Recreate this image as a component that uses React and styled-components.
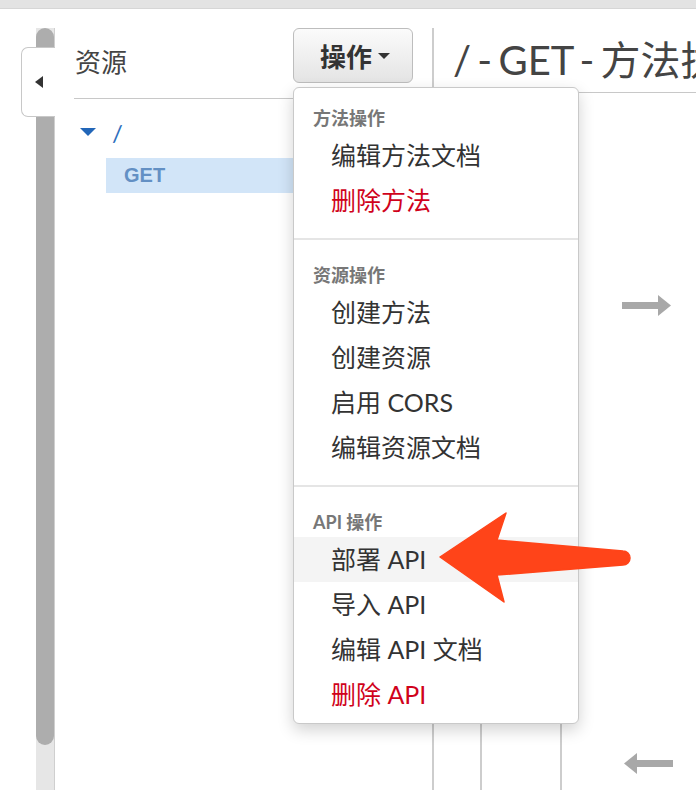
import styled, { createGlobalStyle } from "styled-components";

const GlobalStyle = createGlobalStyle`
  html, body {
    margin: 0;
    padding: 0;
    background: #fff;
  }
  body {
    font-family: Lato, "Noto Sans CJK SC", sans-serif;
    color: #333;
    overflow: hidden;
  }
  * {
    box-sizing: border-box;
  }
`;

const Page = styled.div`
  position: relative;
  width: 696px;
  height: 790px;
  overflow: hidden;
  display: flex;
  flex-direction: column;
`;

const TopBar = styled.div`
  flex-shrink: 0;
  height: 9px;
  background: #e3e3e3;
  border-bottom: 1px solid #d6d6d6;
`;

const Main = styled.div`
  flex: 1;
  min-height: 0;
  display: flex;
  padding: 19px 0 0 36px;
`;

const ScrollTrack = styled.div`
  position: relative;
  flex-shrink: 0;
  width: 19px;
  background: #e6e6e6;
  border-right: 1px solid #cfcfcf;
`;

const ScrollThumb = styled.div`
  height: 717px;
  background: #adadad;
  border-radius: 9px;
`;

const CollapseTab = styled.div`
  position: absolute;
  top: 19px;
  left: -15px;
  width: 34px;
  height: 70px;
  display: flex;
  align-items: center;
  justify-content: center;
  padding-left: 1px;
  background: #fff;
  border: 1px solid #c8c8c8;
  border-right: none;
  border-radius: 7px 0 0 7px;

  &::before {
    content: "";
    border-top: 6px solid transparent;
    border-bottom: 6px solid transparent;
    border-right: 8px solid #333;
  }
`;

const LeftPanel = styled.div`
  flex-shrink: 0;
  width: 379px;
  border-right: 2px solid #cdcdcd;
`;

const PanelHeader = styled.div`
  display: flex;
  justify-content: space-between;
  align-items: flex-start;
  height: 71px;
  margin-left: 19px;
  padding-right: 19px;
  border-bottom: 1px solid #c8c8c8;
`;

const PanelTitle = styled.div`
  margin: 18px 0 0 1px;
  font-size: 26px;
  line-height: 32px;
  color: #444;
`;

const ButtonWrap = styled.div`
  position: relative;
`;

const ActionButton = styled.button`
  display: flex;
  align-items: center;
  gap: 6px;
  width: 120px;
  height: 55px;
  padding: 0 0 0 26px;
  font-family: Lato, "Noto Sans CJK SC", sans-serif;
  font-size: 26px;
  font-weight: bold;
  color: #333;
  background: linear-gradient(#fbfbfb, #e4e4e4);
  border: 1px solid #bdbdbd;
  border-radius: 6px;

  &::after {
    content: "";
    border-top: 6px solid #333;
    border-left: 6px solid transparent;
    border-right: 6px solid transparent;
  }
`;

const Dropdown = styled.div`
  position: absolute;
  top: 59px;
  left: 0;
  z-index: 10;
  width: 286px;
  padding: 15px 0 6px;
  background: #fff;
  border: 1px solid #c9c9c9;
  border-radius: 6px;
  box-shadow: 0 6px 16px rgba(0, 0, 0, 0.18);
`;

const MenuHeader = styled.div`
  height: 30px;
  line-height: 30px;
  padding-left: 19px;
  font-size: 18px;
  font-weight: bold;
  color: #777;
`;

const MenuItem = styled.div`
  height: 45px;
  line-height: 45px;
  padding-left: 37px;
  font-size: 25px;
  white-space: nowrap;
  color: ${(p) => (p.$danger ? "#d0021b" : "#333")};
  background: ${(p) => (p.$active ? "#f4f4f4" : "transparent")};
`;

const MenuDivider = styled.div`
  height: 2px;
  margin: 15px 0 20px;
  background: #e5e5e5;
`;

const Tree = styled.div`
  padding: 16px 0 0 25px;
`;

const TreeRow = styled.div`
  display: flex;
  align-items: center;
  gap: 16px;
  height: 35px;
  font-size: 24px;
  color: #2f6fbd;
`;

const MethodRow = styled.div`
  height: 35px;
  margin: 8px 0 0 26px;
  padding-left: 18px;
  line-height: 35px;
  font-family: "Liberation Sans", Arial, sans-serif;
  font-size: 20px;
  font-weight: bold;
  color: #6390c4;
  background: #d2e5f8;
`;

const RightPanel = styled.div`
  flex: 1;
  min-width: 0;
  display: flex;
  flex-direction: column;
  overflow: hidden;
`;

const TitleBar = styled.div`
  flex-shrink: 0;
  height: 65px;
  padding-left: 19px;
  line-height: 64px;
  font-size: 40px;
  word-spacing: -4px;
  color: #444;
  white-space: nowrap;
  border-bottom: 1px solid #c8c8c8;
`;

const Diagram = styled.div`
  flex: 1;
  display: flex;
`;

const Lane = styled.div`
  flex-shrink: 0;
  width: ${(p) => p.$width}px;
  border-right: 2px solid #cdcdcd;
`;

const FlowLane = styled.div`
  flex: 1;
  display: flex;
  flex-direction: column;
  align-items: flex-start;
  padding: 202px 0 0 60px;
`;

const FlowArrow = styled.svg`
  display: block;
  margin: ${(p) => p.$margin || 0};
`;

const Callout = styled.svg`
  position: absolute;
  left: 438px;
  top: 510px;
  z-index: 20;
`;

const Caret = () => (
  <svg width="16" height="9" viewBox="0 0 16 9">
    <polygon points="0,0 16,0 8,8" fill="#2266b8" />
  </svg>
);

export default function App() {
  return (
    <>
      <GlobalStyle />
      <Page>
        <TopBar />
        <Main>
          <ScrollTrack>
            <ScrollThumb />
            <CollapseTab />
          </ScrollTrack>
          <LeftPanel>
            <PanelHeader>
              <PanelTitle>资源</PanelTitle>
              <ButtonWrap>
                <ActionButton>操作</ActionButton>
                <Dropdown>
                  <MenuHeader>方法操作</MenuHeader>
                  <MenuItem>编辑方法文档</MenuItem>
                  <MenuItem $danger>删除方法</MenuItem>
                  <MenuDivider />
                  <MenuHeader>资源操作</MenuHeader>
                  <MenuItem>创建方法</MenuItem>
                  <MenuItem>创建资源</MenuItem>
                  <MenuItem>启用 CORS</MenuItem>
                  <MenuItem>编辑资源文档</MenuItem>
                  <MenuDivider />
                  <MenuHeader>API 操作</MenuHeader>
                  <MenuItem $active>部署 API</MenuItem>
                  <MenuItem>导入 API</MenuItem>
                  <MenuItem>编辑 API 文档</MenuItem>
                  <MenuItem $danger>删除 API</MenuItem>
                </Dropdown>
              </ButtonWrap>
            </PanelHeader>
            <Tree>
              <TreeRow>
                <Caret />
                <span>/</span>
              </TreeRow>
              <MethodRow>GET</MethodRow>
            </Tree>
          </LeftPanel>
          <RightPanel>
            <TitleBar>/ - GET - 方法执行</TitleBar>
            <Diagram>
              <Lane $width={48} />
              <Lane $width={80} />
              <FlowLane>
                <FlowArrow width="49" height="21" viewBox="0 0 49 21">
                  <rect x="0" y="7" width="37" height="7" fill="#a8a8a8" />
                  <polygon points="36,0 49,10.5 36,21" fill="#a8a8a8" />
                </FlowArrow>
                <FlowArrow
                  width="49"
                  height="21"
                  viewBox="0 0 49 21"
                  $margin="437px 0 0 2px"
                >
                  <rect x="12" y="7" width="37" height="7" fill="#a8a8a8" />
                  <polygon points="13,0 0,10.5 13,21" fill="#a8a8a8" />
                </FlowArrow>
              </FlowLane>
            </Diagram>
          </RightPanel>
        </Main>
        <Callout width="196" height="96" viewBox="0 0 196 96">
          <path
            d="M2,47 L68,3 L59,30 L185,41 A7,7 0 0 1 185,55 L59,65 L66,92 Z"
            fill="#ff4419"
            stroke="#ff4419"
            strokeWidth="1.5"
            strokeLinejoin="round"
          />
        </Callout>
      </Page>
    </>
  );
}
